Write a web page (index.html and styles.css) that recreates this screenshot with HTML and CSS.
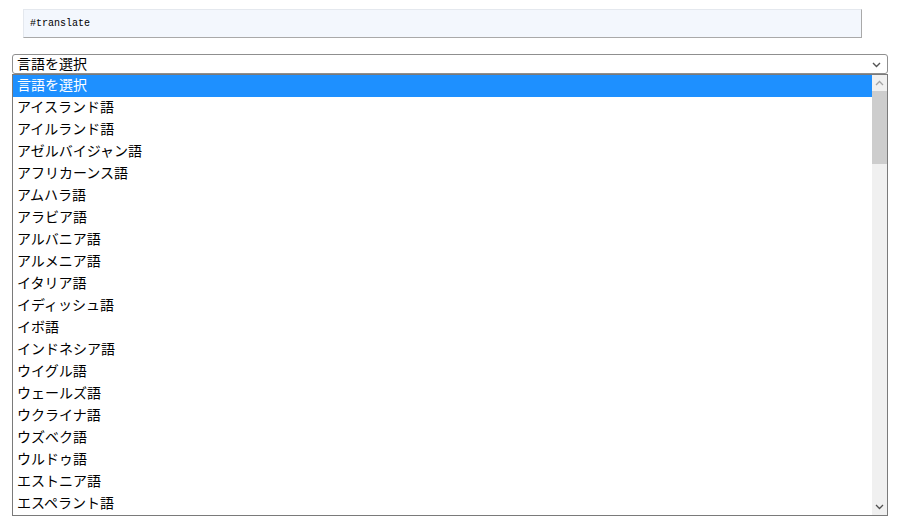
FILE: index.html
```html
<!DOCTYPE html>
<html>
<head>
    <title>翻訳</title>
    <link rel="stylesheet" href="styles.css">
</head>
<body>
    <div class="page">
        <pre class="code">#translate</pre>

        <div class="picker">
            <div class="select-box">
                <span>言語を選択</span>
                <svg class="chev" width="9" height="6" viewBox="0 0 9 6"><path d="M1 1 L4.5 4.5 L8 1" fill="none" stroke="#555" stroke-width="1.4"/></svg>
            </div>
            <div class="listbox">
                <ul class="options">
                    <li class="selected">言語を選択</li>
                    <li>アイスランド語</li>
                    <li>アイルランド語</li>
                    <li>アゼルバイジャン語</li>
                    <li>アフリカーンス語</li>
                    <li>アムハラ語</li>
                    <li>アラビア語</li>
                    <li>アルバニア語</li>
                    <li>アルメニア語</li>
                    <li>イタリア語</li>
                    <li>イディッシュ語</li>
                    <li>イボ語</li>
                    <li>インドネシア語</li>
                    <li>ウイグル語</li>
                    <li>ウェールズ語</li>
                    <li>ウクライナ語</li>
                    <li>ウズベク語</li>
                    <li>ウルドゥ語</li>
                    <li>エストニア語</li>
                    <li>エスペラント語</li>
                </ul>
                <div class="scrollbar">
                    <svg class="arrow" width="9" height="6" viewBox="0 0 9 6"><path d="M1 5 L4.5 1.5 L8 5" fill="none" stroke="#a3a3a3" stroke-width="1.3"/></svg>
                    <div class="track"><div class="thumb"></div></div>
                    <svg class="arrow" width="9" height="6" viewBox="0 0 9 6"><path d="M1 1 L4.5 4.5 L8 1" fill="none" stroke="#505050" stroke-width="1.3"/></svg>
                </div>
            </div>
        </div>
    </div>
</body>
</html>
```

FILE: styles.css
```css
body {
    margin: 0;
    background: #fff;
    color: #000;
    font-family: "Noto Sans CJK JP", "Noto Sans", sans-serif;
}
.page {
    padding: 9px 14px 0 12px;
}
.code {
    margin: 0 0 16px 11px;
    width: 831px;
    height: 27px;
    padding: 0 0 0 6px;
    box-sizing: content-box;
    background: #f3f7fd;
    border-top: 1px solid #e4e8ee;
    border-left: 1px solid #e4e8ee;
    border-right: 1px solid #a9a9a9;
    border-bottom: 1px solid #a9a9a9;
    font-family: "Liberation Mono", monospace;
    font-size: 10px;
    line-height: 27px;
    color: #000;
}
.picker {
    width: 876px;
}
.select-box {
    display: flex;
    align-items: center;
    justify-content: space-between;
    height: 18px;
    padding: 0 6px 0 4px;
    border: 1px solid #8f8f8f;
    border-radius: 3px;
    font-size: 14px;
    line-height: 18px;
}
.select-box span {
    margin-top: -3px;
}
.chev {
    margin-top: 1px;
}
.listbox {
    display: flex;
    height: 440px;
    border: 1px solid #7a7a7a;
    overflow: hidden;
}
.options {
    flex: 1;
    list-style: none;
    margin: 0;
    padding: 0;
}
.options li {
    height: 18px;
    padding: 0 0 4px 4px;
    font-size: 14px;
    line-height: 18px;
    white-space: nowrap;
}
.options li.selected {
    background: #1e90ff;
    color: #fff;
}
.scrollbar {
    width: 15px;
    background: #f0f0f0;
    display: flex;
    flex-direction: column;
    align-items: center;
}
.arrow {
    margin: 5px 0;
    flex: none;
}
.track {
    flex: 1;
    width: 100%;
}
.thumb {
    width: 100%;
    height: 73px;
    background: #cdcdcd;
}
```
